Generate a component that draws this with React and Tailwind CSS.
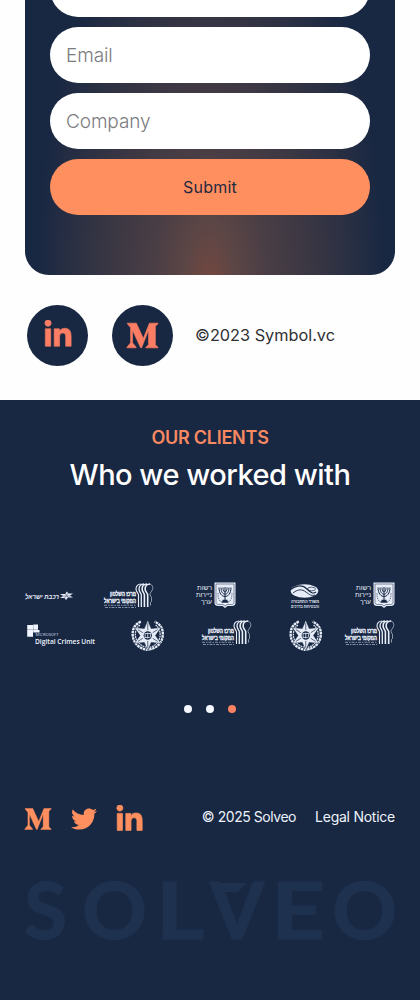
import React from "react";
import { FaLinkedinIn, FaMediumM, FaTwitter } from "react-icons/fa";

const INK = "#182742";
const hebrew = { fontFamily: '"Liberation Sans", sans-serif' };

function Field({ label }) {
  return (
    <input
      type="text"
      placeholder={label}
      className="block h-14 w-full shrink-0 rounded-full bg-white px-4 text-[19px] font-light tracking-[-0.1px] text-gray-700 outline-none placeholder:text-[#7b7c80]"
    />
  );
}

function Railways({ className }) {
  return (
    <svg className={className} width="49" height="12" viewBox="0 0 49 12" fill="#e8eefa" overflow="visible">
      <text x="0" y="8.5" textLength="34" lengthAdjust="spacingAndGlyphs" fontSize="7.2" fontWeight="700" fontStyle="italic" style={hebrew}>רכבת ישראל</text>
      <path d="M35 4h5l2-2.5 1.5 2H48l-3 2 3 2h-5l-2 2.5-1.5-2H35l3-2z" />
      <path d="M36 6h11M40 3l4 6M43 3l-4 6" stroke={INK} strokeWidth=".4" />
    </svg>
  );
}

function LocalGov({ className }) {
  return (
    <svg className={className} width="50" height="26" viewBox="0 0 50 26" fill="#eaf0fb" overflow="visible">
      <text x="6" y="13.3" textLength="26" lengthAdjust="spacingAndGlyphs" fontSize="6.3" fontWeight="700" stroke="#eaf0fb" strokeWidth=".35" style={hebrew}>מרכז השלטון</text>
      <text x="0" y="20" textLength="32" lengthAdjust="spacingAndGlyphs" fontSize="6.3" fontWeight="700" stroke="#eaf0fb" strokeWidth=".35" style={hebrew}>המקומי בישראל</text>
      <path d="M0 22.3h32M1 24.5h31" stroke="#9daac2" strokeWidth=".8" strokeDasharray="3 1 1.5 1" />
      <g fill="none" stroke="#eaf0fb">
        <path d="M34.5 24V12c0-2-2.5-3-2.5-6s2-5 5-5" strokeWidth="1.1" />
        <path d="M37.3 24V12c0-2-2.3-3-2.3-6s2-5 5-5" strokeWidth="1.3" />
        <path d="M40.4 24V12c0-2-2.3-3-2.3-6s2-5 5-5" strokeWidth="1.6" />
        <path d="M43.7 24V12c0-2-2.6-3-2.6-6s2-5 5-5" strokeWidth="1.6" />
        <path d="M45 1c3 0 4.5 3 3.5 5.5s-2.5 3-2.5 5l1.5 3v4l-1 1v3" strokeWidth=".8" opacity=".7" />
      </g>
    </svg>
  );
}

function Securities({ className }) {
  return (
    <svg className={className} width="40" height="27" viewBox="0 0 40 27" fill="#e6edf9" overflow="visible">
      <text x="1" y="7.5" textLength="15" lengthAdjust="spacingAndGlyphs" fontSize="6.8" style={hebrew}>רשות</text>
      <text x="0" y="14.5" textLength="16" lengthAdjust="spacingAndGlyphs" fontSize="6.8" style={hebrew}>ניירות</text>
      <text x="5" y="21.5" textLength="11" lengthAdjust="spacingAndGlyphs" fontSize="6.8" style={hebrew}>ערך</text>
      <path d="M18.5.5H39.5V21c0 2-1.5 3-3.5 3h-4.5L29 26l-2.5-2H22c-2 0-3.5-1-3.5-3z" />
      <path d="M20 2h18v18.5c0 1.3-1 2-2.5 2H31l-2 1.5-2-1.5h-4.5c-1.5 0-2.5-.7-2.5-2z" fill="none" stroke={INK} strokeWidth=".5" />
      <g fill="none" stroke={INK} strokeWidth="1">
        <path d="M29 5v13M27 5.5c0 6 4 6 4 0M25 5.5c0 9 8 9 8 0M23 5.5c0 12 12 12 12 0" />
        <path d="M26.5 18.5h5M25.5 20h7" strokeWidth="1.3" />
        <path d="M22 11c0 5 1 7 3 9M36 11c0 5-1 7-3 9" strokeWidth=".6" strokeDasharray="1.5 .8" />
      </g>
    </svg>
  );
}

function Transport({ className }) {
  return (
    <svg className={className} width="30" height="25" viewBox="0 0 30 25" fill="#e6edf9" overflow="visible">
      <ellipse cx="14.5" cy="8" rx="13.8" ry="6.8" />
      <g fill="none" stroke={INK}>
        <path d="M0 7c7-5 13-5 17-1s6 5 9 3" strokeWidth="1.2" />
        <path d="M3 10c5-4 9-4 13-1s5 4 9 3" strokeWidth=".9" />
      </g>
      <ellipse cx="21.5" cy="6" rx="4" ry="1.8" fill="none" stroke={INK} strokeWidth=".7" />
      <text x="1" y="20" textLength="28" lengthAdjust="spacingAndGlyphs" fontSize="4.6" fontWeight="700" style={hebrew}>משרד התחבורה</text>
      <text x="1" y="24.8" textLength="28" lengthAdjust="spacingAndGlyphs" fontSize="4.4" fontWeight="700" style={hebrew}>והבטיחות בדרכים</text>
    </svg>
  );
}

function CrimesUnit({ className }) {
  return (
    <svg className={className} width="69" height="23" viewBox="0 0 69 23" fill="#f1f5ff" overflow="visible">
      <path d="M.2 1h5.8v4.8H.2zM6.2.5h4.800v5.300H6.200zM.2 6h5.800v6.800H.2zM6.200 6h6.300v2.500H6.200z" />
      <text x="8.5" y="12.2" textLength="23" lengthAdjust="spacingAndGlyphs" fontSize="4.2" fill="#d0d9e8" style={{ fontFamily: '"Open Sans", sans-serif' }}>MICROSOFT</text>
      <text x="8" y="20.3" textLength="60" lengthAdjust="spacingAndGlyphs" fontSize="7.7" fontWeight="600" style={{ fontFamily: '"Open Sans", sans-serif' }}>Digital Crimes Unit</text>
    </svg>
  );
}

function Police({ className }) {
  return (
    <svg className={className} width="34" height="33" viewBox="0 0 34 33" fill="none" stroke="#e6edf9">
      <path d="M10 2.5C4 5 1 10 1.8 17S8 30 17 31c9-1 14.4-7 15.2-14S30 5 24 2.5" strokeWidth="2.4" strokeDasharray="2.6 .6" />
      <path d="M9 6C6 8 4 12 4.5 17S10 28 17 28.5 29 22 29.5 17 28 8 25 6" strokeWidth="1.3" strokeDasharray="1.8 .7" />
      <path d="M17 1l3.5 8.5 10-1-5.700 8 5.700 8-10-1L17 32l-3.500-8.500-10 1 5.700-8-5.700-8 10 1z" fill="#e6edf9" stroke={INK} strokeWidth=".5" />
      <path d="M17 4v7M7 10.5l5 3.2M27 10.5l-5 3.2M7 22.5l5-3.2M27 22.5l-5-3.2M17 29v-7" stroke={INK} strokeWidth=".7" />
      <circle cx="17" cy="16.5" r="4.8" fill={INK} strokeWidth="1.1" />
      <path d="M14.3 14.5v4.5M17 13.5v6M19.7 14v4.5M14 14.5h6M14 18.5h5" strokeWidth=".8" />
    </svg>
  );
}

function Wordmark() {
  return (
    <svg width="370" height="70" viewBox="0 0 370 70" fill="#1e314e" overflow="visible" aria-label="Solveo">
      <g fontSize="78" fontWeight="700" stroke="#1e314e" strokeWidth="1.5" style={{ fontFamily: 'Lato, sans-serif' }}>
        <text x="-1" y="60" textLength="43" lengthAdjust="spacingAndGlyphs">S</text>
        <text x="57" y="60" textLength="65" lengthAdjust="spacingAndGlyphs">O</text>
        <text x="131" y="60" textLength="48" lengthAdjust="spacingAndGlyphs">L</text>
        <text x="185" y="60" textLength="54" lengthAdjust="spacingAndGlyphs">V</text>
        <text x="246" y="60" textLength="54" lengthAdjust="spacingAndGlyphs">E</text>
        <text x="307" y="60" textLength="65" lengthAdjust="spacingAndGlyphs">O</text>
      </g>
      <path d="M186 4h35l-8 9h-21z" />
    </svg>
  );
}

export default function App() {
  return (
    <div className="flex h-[1000px] w-[420px] flex-col overflow-hidden bg-[#fefefe] font-['Inter',sans-serif]">
      <form className="mx-[25px] flex h-[275px] shrink-0 flex-col justify-end gap-2.5 overflow-hidden rounded-b-[24px] bg-[#182742] bg-[radial-gradient(ellipse_175px_420px_at_50%_104%,#75473f_0%,#5e4645_13%,#4a3e45_32%,#3b3743_56%,#2b3043_78%,#182742_100%)] px-[25px] pb-[60px]">
        <Field label="" />
        <Field label="Email" />
        <Field label="Company" />
        <button type="button" className="h-14 shrink-0 rounded-full bg-[#ff8f5e] text-base tracking-[0.2px] text-[#242942]">
          Submit
        </button>
      </form>

      <div className="flex h-[125px] shrink-0 items-center pb-[5px] pl-[27px]">
        <a className="flex size-[61px] items-center justify-center rounded-full bg-[#182742] text-[#fb7e64]">
          <FaLinkedinIn size={30} stroke="currentColor" strokeWidth={10} />
        </a>
        <a className="ml-6 flex size-[61px] items-center justify-center rounded-full bg-[#182742] pt-px text-[#fb7e64]">
          <FaMediumM size={33} stroke="currentColor" strokeWidth={10} />
        </a>
        <p className="ml-[22px] text-[16.3px] whitespace-nowrap text-[#303033]">©2023 Symbol.vc</p>
      </div>

      <section className="flex h-[600px] shrink-0 flex-col bg-[#182742] px-[25px]">
        <h3 className="mt-[26px] text-center text-[18px] leading-6 font-semibold tracking-[-0.25px] text-[#f88961]">OUR CLIENTS</h3>
        <h2 className="text-center text-[29px] leading-[50px] font-medium tracking-[-0.5px] whitespace-nowrap text-white">Who we worked with</h2>

        <div className="mt-[82px] flex h-[27px] items-center">
          <Railways />
          <LocalGov className="ml-[30px]" />
          <Securities className="ml-[42px]" />
          <Transport className="ml-[54px]" />
          <Securities className="ml-[35px]" />
        </div>
        <div className="mt-[10px] flex h-[33px] items-start">
          <CrimesUnit className="mt-[5px] ml-[2px]" />
          <Police className="ml-[35px]" />
          <LocalGov className="mt-px ml-[37px]" />
          <Police className="ml-[37px]" />
          <LocalGov className="mt-px ml-[23px]" />
        </div>

        <div className="mt-[53px] flex justify-center gap-3.5">
          <span className="size-2 rounded-full bg-[#f5f9ff]" />
          <span className="size-2 rounded-full bg-[#f5f9ff]" />
          <span className="size-2 rounded-full bg-[#fb8160]" />
        </div>

        <footer className="mt-[92px] flex h-7 items-center text-[#ff8f5e]">
          <FaMediumM size={28} stroke="currentColor" strokeWidth={8} className="-ml-px" />
          <FaTwitter size={26} className="ml-[19px]" />
          <FaLinkedinIn size={29} stroke="currentColor" strokeWidth={12} className="ml-[18px]" />
          <div className="ml-auto flex gap-[19px] pb-1 text-sm whitespace-nowrap text-[#edf3fc]">
            <span className="tracking-[-0.45px]">© 2025 Solveo</span>
            <span className="tracking-[-0.25px]">Legal Notice</span>
          </div>
        </footer>

        <div className="mt-[46px]">
          <Wordmark />
        </div>
      </section>
    </div>
  );
}
